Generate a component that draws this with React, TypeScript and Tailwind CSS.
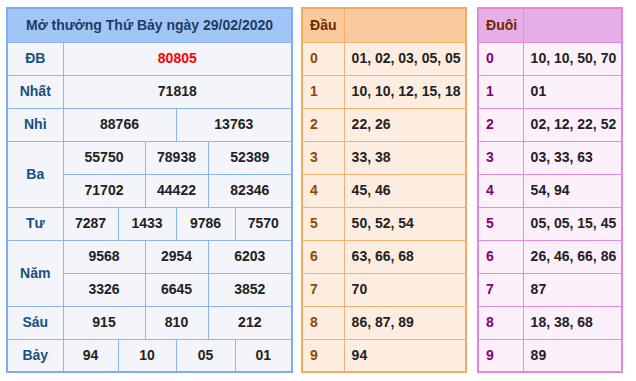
import React from 'react';

const font = { fontFamily: '"Liberation Sans", Arial, sans-serif' };

const dau: [string, string][] = [
  ['0', '01, 02, 03, 05, 05'],
  ['1', '10, 10, 12, 15, 18'],
  ['2', '22, 26'],
  ['3', '33, 38'],
  ['4', '45, 46'],
  ['5', '50, 52, 54'],
  ['6', '63, 66, 68'],
  ['7', '70'],
  ['8', '86, 87, 89'],
  ['9', '94'],
];

const duoi: [string, string][] = [
  ['0', '10, 10, 50, 70'],
  ['1', '01'],
  ['2', '02, 12, 22, 52'],
  ['3', '03, 33, 63'],
  ['4', '54, 94'],
  ['5', '05, 05, 15, 45'],
  ['6', '26, 46, 66, 86'],
  ['7', '87'],
  ['8', '18, 38, 68'],
  ['9', '89'],
];

const td = 'border border-[#8db5f2] h-[33px] p-0 text-center text-[14px] font-bold text-[#222] whitespace-nowrap';
const lb = 'border border-[#8db5f2] h-[33px] p-0 text-center text-[14px] font-bold text-[#17507f] whitespace-nowrap';

function ResultTable() {
  return (
    <table className="w-[285px] table-fixed border-collapse border-2 border-[#7eabf2] bg-[#f3f5fa]">
      <colgroup>
        <col className="w-[56px]" />
        <col className="w-[55px]" />
        <col className="w-[27px]" />
        <col className="w-[31px]" />
        <col className="w-[32px]" />
        <col className="w-[27px]" />
        <col className="w-[57px]" />
      </colgroup>
      <tbody>
        <tr>
          <td colSpan={7} className="border border-[#8db5f2] bg-[#a2c5f8] h-[34px] p-0 text-center text-[14px] font-bold text-[#1c3d5e] whitespace-nowrap">
            Mở thưởng Thứ Bảy ngày 29/02/2020
          </td>
        </tr>
        <tr>
          <td className={lb}>ĐB</td>
          <td colSpan={6} className={`${td} !text-[#ff0000]`}>80805</td>
        </tr>
        <tr>
          <td className={lb}>Nhất</td>
          <td colSpan={6} className={td}>71818</td>
        </tr>
        <tr>
          <td className={lb}>Nhì</td>
          <td colSpan={3} className={td}>88766</td>
          <td colSpan={3} className={td}>13763</td>
        </tr>
        <tr>
          <td rowSpan={2} className={lb}>Ba</td>
          <td colSpan={2} className={td}>55750</td>
          <td colSpan={2} className={td}>78938</td>
          <td colSpan={2} className={td}>52389</td>
        </tr>
        <tr>
          <td colSpan={2} className={td}>71702</td>
          <td colSpan={2} className={td}>44422</td>
          <td colSpan={2} className={td}>82346</td>
        </tr>
        <tr>
          <td className={lb}>Tư</td>
          <td className={td}>7287</td>
          <td colSpan={2} className={td}>1433</td>
          <td colSpan={2} className={td}>9786</td>
          <td className={td}>7570</td>
        </tr>
        <tr>
          <td rowSpan={2} className={lb}>Năm</td>
          <td colSpan={2} className={td}>9568</td>
          <td colSpan={2} className={td}>2954</td>
          <td colSpan={2} className={td}>6203</td>
        </tr>
        <tr>
          <td colSpan={2} className={td}>3326</td>
          <td colSpan={2} className={td}>6645</td>
          <td colSpan={2} className={td}>3852</td>
        </tr>
        <tr>
          <td className={lb}>Sáu</td>
          <td colSpan={2} className={td}>915</td>
          <td colSpan={2} className={td}>810</td>
          <td colSpan={2} className={td}>212</td>
        </tr>
        <tr>
          <td className={lb}>Bảy</td>
          <td className={td}>94</td>
          <td colSpan={2} className={td}>10</td>
          <td colSpan={2} className={td}>05</td>
          <td className={td}>01</td>
        </tr>
      </tbody>
    </table>
  );
}

function DauTable() {
  const c = 'border border-[#f6b171] h-[33px] pl-[7px] pr-0 py-0 text-left text-[14px] font-bold whitespace-nowrap overflow-hidden';
  return (
    <table className="w-[164px] table-fixed border-collapse border-2 border-[#f5aa62] bg-[#fdede1]">
      <colgroup>
        <col className="w-[42px]" />
        <col className="w-[122px]" />
      </colgroup>
      <tbody>
        <tr className="bg-[#fbca9c]">
          <td className={`${c} h-[34px] text-[#6b2a00]`}>Đầu</td>
          <td className={`${c} h-[34px]`}></td>
        </tr>
        {dau.map(([k, v]) => (
          <tr key={k}>
            <td className={`${c} text-[#8e4a00]`}>{k}</td>
            <td className={`${c} text-[#222]`}>{v}</td>
          </tr>
        ))}
      </tbody>
    </table>
  );
}

function DuoiTable() {
  const c = 'border border-[#e88ae2] h-[33px] pl-[7px] pr-0 py-0 text-left text-[14px] font-bold whitespace-nowrap overflow-hidden';
  return (
    <table className="w-[144px] table-fixed border-collapse border-2 border-[#e386de] bg-[#fcf0fb]">
      <colgroup>
        <col className="w-[45px]" />
        <col className="w-[99px]" />
      </colgroup>
      <tbody>
        <tr className="bg-[#e5aee6]">
          <td className={`${c} h-[34px] text-[#6b2a00]`}>Đuôi</td>
          <td className={`${c} h-[34px]`}></td>
        </tr>
        {duoi.map(([k, v]) => (
          <tr key={k}>
            <td className={`${c} text-[#82007f]`}>{k}</td>
            <td className={`${c} text-[#222]`}>{v}</td>
          </tr>
        ))}
      </tbody>
    </table>
  );
}

export default function App() {
  return (
    <div className="w-[636px] h-[381px] bg-white pt-[7px] pl-[6px] flex items-start" style={font}>
      <ResultTable />
      <div className="ml-[8px]">
        <DauTable />
      </div>
      <div className="ml-[10px]">
        <DuoiTable />
      </div>
    </div>
  );
}
